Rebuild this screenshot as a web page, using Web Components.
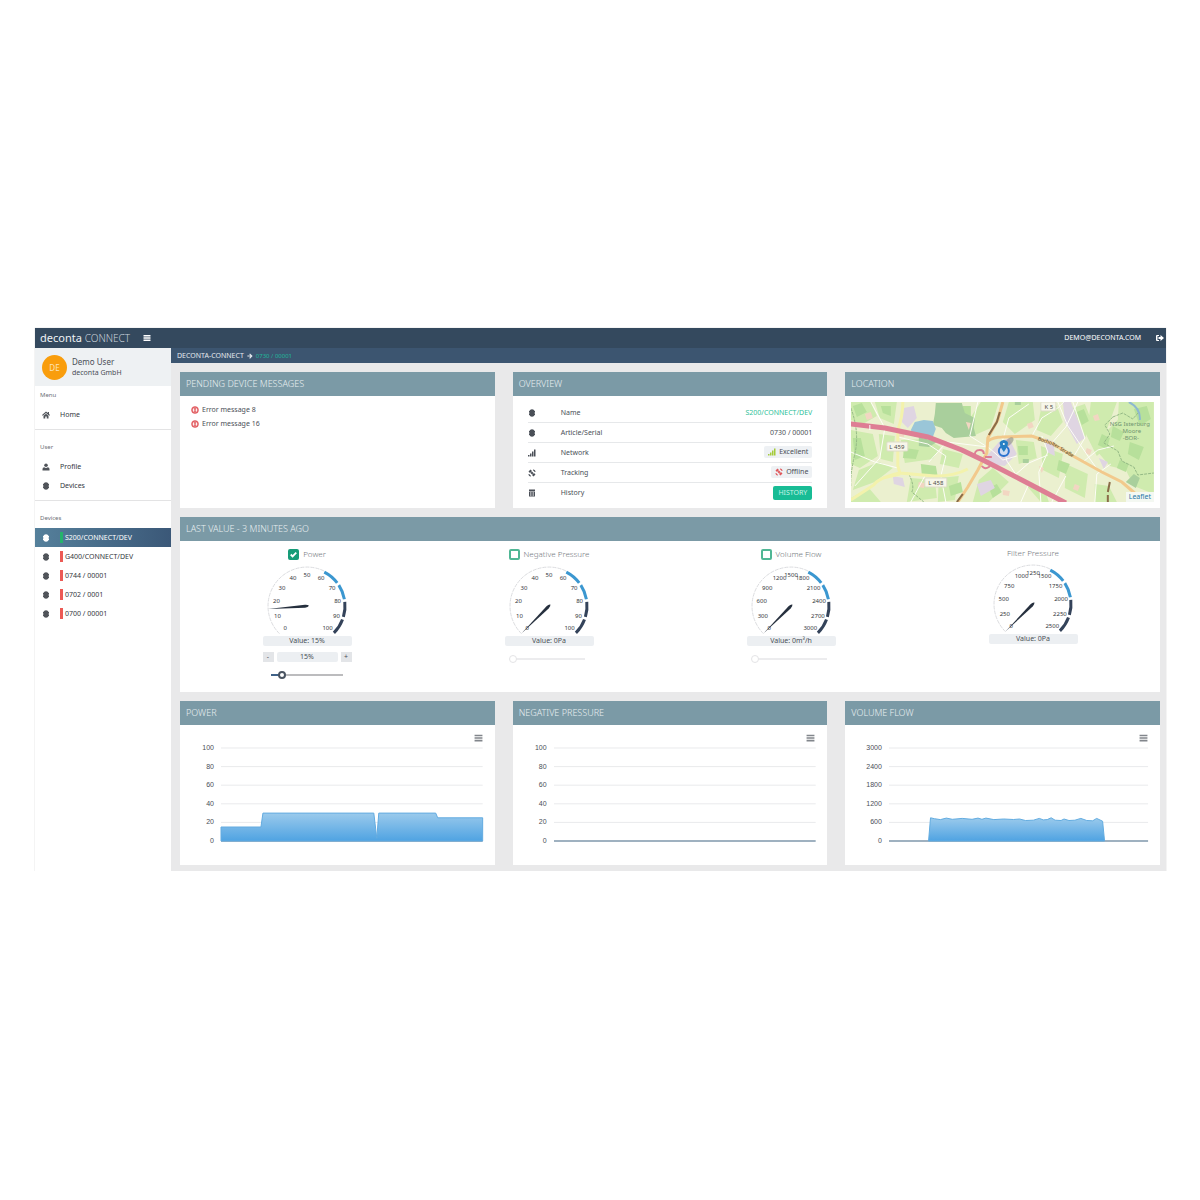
<!DOCTYPE html>
<html lang="en">
<head>
<meta charset="utf-8">
<title>deconta CONNECT</title>
<style>
    body {
        margin: 0;
        padding: 328px 34px 0 35px;
        background: #fff;
        color: #4a4f57;
        font: 7px/10px "Noto Sans", "Open Sans", sans-serif;
    }
</style>
</head>
<body>
<connect-app></connect-app>

<script>
const ICONS = {
    bars: '<path d="M1 2h14v3H1zM1 6.500h14v3H1zM1 11h14v3H1z"/>',
    home: '<path d="M8 1 0 8l1.500 1.500L8 4l6.500 5.500L16 8l-2-1.800V2h-2.500v2zM3 9.500V15h3.500v-4h3v4H13V9.500L8 5.300z"/>',
    user: '<circle cx="8" cy="4.500" r="3.500"/><path d="M1 15v-3q0-3 3.500-3.500Q8 11 11.500 8.500 15 9 15 12v3z"/>',
    device: '<path d="M4 2q4-3 8 0l1 2h1v2h-1v1h1v2h-1v1h1v2h-1l-1 2q-4 3-8 0l-1-2H2v-2h1V9H2V7h1V6H2V4h1z"/>',
    signal: '<path d="M0 12h3v3H0zM4 9h3v6H4zM8 5h3v10H8zM12 1h3v14h-3z"/>',
    satellite: '<path d="m1 5 4-4 3 3-4 4zM8 12l4-4 3 3-4 4zM5 8l3-3 3 3-3 3zM10 1q5 0 5 5h-2q0-3-3-3zM1 10q0 5 5 5v-2q-3 0-3-3z"/>',
    calendar: '<path d="M2 1h12v3H2zM2 5h12v10H2zm2 2v2h2V7zm3 0v2h2V7zm3 0v2h2V7zm-6 4v2h2v-2zm3 0v2h2v-2zm3 0v2h2v-2z" fill-rule="evenodd"/>',
    logout: '<path d="M6 2H2Q0 2 0 4v8q0 2 2 2h4v-2H3V4h3zM9 2l7 6-7 6v-4H5V6h4z"/>',
    arrow: '<path d="M8 1 15 8l-7 7-2-2 3-3.500H1v-3h8L6 3z"/>',
    error: '<path d="M8 1a7 7 0 1 0 0 14A7 7 0 0 0 8 1zM7 4h2v5H7zm0 6h2v2H7zM8 3a5 5 0 1 1 0 10A5 5 0 0 1 8 3z" fill-rule="evenodd" stroke="currentColor"/>'
};

class AppIcon extends HTMLElement {
    connectedCallback() {
        this.attachShadow({mode: "open"}).innerHTML = `
            <style>
                :host { display: inline-block; flex: none; width: 8px; height: 8px; }
                svg { display: block; width: 100%; height: 100%; fill: currentColor; }
            </style>
            <svg viewBox="0 0 16 16" aria-hidden="true">${ICONS[this.getAttribute("name")]}</svg>`;
    }
}

class AppHeader extends HTMLElement {
    connectedCallback() {
        this.attachShadow({mode: "open"}).innerHTML = `
            <style>
                :host {
                    display: flex;
                    align-items: center;
                    height: 20px;
                    padding: 0 2px 0 5px;
                    background: #34495e;
                    color: #fff;
                }
                .brand { font-size: 11px; color: #eef2f5; text-decoration: none; }
                .brand span { font-size: 10px; font-weight: 300; color: #c9d2da; }
                button { display: flex; padding: 0; border: 0; background: none; color: inherit; }
                .toggle { margin-left: 13px; }
                .mail { margin: 0 15px 0 auto; }
            </style>
            <a class="brand" href="#">deconta <span>CONNECT</span></a>
            <button class="toggle" aria-label="Toggle menu"><app-icon name="bars"></app-icon></button>
            <span class="mail">DEMO@DECONTA.COM</span>
            <button aria-label="Log out"><app-icon name="logout"></app-icon></button>`;
    }
}

class NavSection extends HTMLElement {
    connectedCallback() {
        this.attachShadow({mode: "open"}).innerHTML = `
            <style>
                :host { display: block; padding: 8px 0 5px; border-bottom: 1px solid #e3e3e4; }
                :host([first]) { padding-top: 0; }
                :host([last]) { border: 0; }
                h2 { margin: 0; padding-left: 5px; font-size: 6px; font-weight: 400; line-height: 19px; color: #6b6f75; }
            </style>
            <h2>${this.getAttribute("label")}</h2>
            <slot></slot>`;
    }
}

class NavItem extends HTMLElement {
    connectedCallback() {
        this.attachShadow({mode: "open"}).innerHTML = `
            <style>
                :host { display: block; color: #34383e; }
                :host([active]) { background: linear-gradient(90deg, #55809b, #3b5878); color: #fff; }
                a {
                    display: flex;
                    align-items: center;
                    height: 19px;
                    padding-left: 7px;
                    color: inherit;
                    text-decoration: none;
                }
                app-icon { margin-right: 10px; color: #50545a; }
                :host([active]) app-icon { color: #fff; }
                .state { width: 3px; height: 11px; margin-right: 2px; background: #ec5a55; }
                .state.on { background: #25b36b; }
            </style>
            <a href="#">
                <app-icon name="${this.getAttribute("icon")}"></app-icon>
                ${this.hasAttribute("state") ? `<span class="state ${this.getAttribute("state")}"></span>` : ""}
                <slot></slot>
            </a>`;
    }
}

class AppSidebar extends HTMLElement {
    connectedCallback() {
        this.attachShadow({mode: "open"}).innerHTML = `
            <style>
                :host { display: block; background: #fff; }
                .user { display: flex; align-items: center; gap: 5px; height: 38px; padding-left: 7px; background: #eef1f3; }
                .avatar {
                    width: 25px;
                    border-radius: 50%;
                    background: #f99d0c;
                    color: #fde3b6;
                    font-size: 8px;
                    line-height: 25px;
                    text-align: center;
                }
                .name { font-size: 8px; line-height: 11px; }
                .name small { display: block; font-size: 7px; }
            </style>
            <div class="user">
                <div class="avatar">DE</div>
                <div class="name">Demo User<small>deconta GmbH</small></div>
            </div>
            <nav>
                <nav-section label="Menu" first>
                    <nav-item icon="home">Home</nav-item>
                </nav-section>
                <nav-section label="User">
                    <nav-item icon="user">Profile</nav-item>
                    <nav-item icon="device">Devices</nav-item>
                </nav-section>
                <nav-section label="Devices" last>
                    <nav-item icon="device" state="on" active>S200/CONNECT/DEV</nav-item>
                    <nav-item icon="device" state="off">G400/CONNECT/DEV</nav-item>
                    <nav-item icon="device" state="off">0744 / 00001</nav-item>
                    <nav-item icon="device" state="off">0702 / 0001</nav-item>
                    <nav-item icon="device" state="off">0700 / 00001</nav-item>
                </nav-section>
            </nav>`;
    }
}

class PanelCard extends HTMLElement {
    connectedCallback() {
        this.attachShadow({mode: "open"}).innerHTML = `
            <style>
                :host { display: block; min-width: 0; background: #fff; }
                h2 {
                    margin: 0;
                    padding: 0 6px;
                    background: #7b9aa6;
                    color: #e8eff1;
                    font-size: 9px;
                    font-weight: 300;
                    line-height: 24px;
                }
                .body { padding: 6px; }
            </style>
            <h2>${this.getAttribute("heading")}</h2>
            <div class="body"><slot></slot></div>`;
    }
}

class MessageList extends HTMLElement {
    connectedCallback() {
        this.attachShadow({mode: "open"}).innerHTML = `
            <style>
                ul { margin: 0; padding: 1px 5px; list-style: none; }
                li { display: flex; align-items: center; gap: 3px; line-height: 14px; }
                app-icon { color: #e0575b; }
            </style>
            <ul>
                <li><app-icon name="error"></app-icon>Error message 8</li>
                <li><app-icon name="error"></app-icon>Error message 16</li>
            </ul>`;
    }
}

class DeviceOverview extends HTMLElement {
    connectedCallback() {
        this.attachShadow({mode: "open"}).innerHTML = `
            <style>
                :host { display: block; padding: 1px 9px 0; }
                table { width: 100%; border-spacing: 0; }
                th, td { height: 19px; padding: 0; border-bottom: 1px solid #e6e8ea; text-align: right; }
                th { width: 50%; font-weight: 400; text-align: left; }
                td:first-child { width: 33px; text-align: left; }
                tr:last-child > * { border: 0; }
                app-icon { display: block; }
                a { color: #2fbf9b; text-decoration: none; }
                .badge {
                    display: inline-flex;
                    align-items: center;
                    gap: 3px;
                    height: 12px;
                    padding: 0 4px;
                    border-radius: 2px;
                    background: #eef1f4;
                }
                .good { color: #a4cb39; }
                .bad { color: #e0575b; }
                button {
                    display: block;
                    height: 14px;
                    margin-left: auto;
                    padding: 0 5px;
                    border: 0;
                    border-radius: 2px;
                    background: #18bc95;
                    color: #c8f2e6;
                    font: inherit;
                }
            </style>
            <table>
                <tr><td><app-icon name="device"></app-icon></td><th scope="row">Name</th><td><a href="#">S200/CONNECT/DEV</a></td></tr>
                <tr><td><app-icon name="device"></app-icon></td><th scope="row">Article/Serial</th><td>0730 / 00001</td></tr>
                <tr><td><app-icon name="signal"></app-icon></td><th scope="row">Network</th>
                    <td><span class="badge"><app-icon class="good" name="signal"></app-icon>Excellent</span></td></tr>
                <tr><td><app-icon name="satellite"></app-icon></td><th scope="row">Tracking</th>
                    <td><span class="badge"><app-icon class="bad" name="satellite"></app-icon>Offline</span></td></tr>
                <tr><td><app-icon name="calendar"></app-icon></td><th scope="row">History</th><td><button>HISTORY</button></td></tr>
            </table>`;
    }
}

class LocationMap extends HTMLElement {
    connectedCallback() {
        this.attachShadow({mode: "open"}).innerHTML = `
            <style>
                :host { display: grid; overflow: hidden; }
                svg, a { grid-area: 1 / 1; }
                svg { width: 100%; height: 100px; }
                text { font-size: 6px; fill: #4d4d45; text-anchor: middle; }
                .shield { fill: #f7f6ea; stroke: #dedcc8; }
                .nature { fill: #6f9470; }
                .street { font-size: 5px; fill: #4b3c20; }
                a {
                    place-self: end;
                    padding: 0 3px;
                    background: #f4f8f2;
                    color: #2477a8;
                    font-size: 7px;
                    line-height: 10px;
                    text-decoration: none;
                }
            </style>
            <svg viewBox="0 0 303 100" preserveAspectRatio="xMidYMid slice" role="img" aria-label="Device location">
                <rect width="303" height="100" fill="#ebf0cf"/>
                <g fill="#cfebae">
                    <path d="M0 0h20l6 14-14 8-12-4zM24 0h22l-3 22-14-6zM0 28l22 4 5 22-18 12-9-4zM28 32l16 2-2 26-12-3zM8 68l20-8 14 6-18 14-22 8zM50 38l26-1 14 8-8 12-28 4zM92 47l20 5-4 14-19-4zM60 76l24 2 2 18-30 4zM0 96l18-10 12 14H0z"/>
                    <path d="M88 76l20-2-4 24-17 2zM128 78l14-12 16 14-20 20h-16zM130 0h18l-8 26-18 8-4-16zM158 0l24 0 2 18-20 14-12-12zM190 8l16-4 6 16-12 14-14-6zM165 38l18 2 3 16-18 6zM190 44l22 8-4 24-16-8zM176 84l18 4 4 12h-8zM215 62l22 10-3 24-20-10z"/>
                    <path d="M222 6l12-4 8 20-8 14zM240 0h26l-10 28 6 12-16 14-10-20zM268 0h35v92l-20-8-8-16-16-4-12-14 13-8-3-14 10-10zM244 82l14 2 8 16h-22z"/>
                </g>
                <g fill="#b7e09b">
                    <path d="M2 4l9-3 5 9-10 5zM30 4h10v10l-8-3zM2 36h8l4 18-10 4zM54 46l14 2-3 9-13-1zM70 62l15 2 2 11-16-2zM112 4h8v12l-7 3zM98 84l12-4 2 10-12 4zM138 86l8-4 5 8-9 6zM167 44h10v9h-9zM208 58l11 4-4 10-9-4zM226 10l7-3 5 12-7 4zM251 32l8 4-3 11-9-4zM262 24l11 6-4 9-9-4zM279 40l14 5-5 13-11-6zM269 58l9 4-3 8-9-4zM283 7l13-3 4 13-11 7z"/>
                </g>
                <g fill="#a9cf9c">
                    <path d="M85 1h26l3 10 10 5-1 10 2 8-22 2-8-5-4-5-9-3 2-11zM68 35l18 5-8 5-10-1zM275 80l8-8 6 4-4 10zM164 0h6v3h-6zM172 57h6v4h-6z"/>
                </g>
                <g fill="#dfd5e2">
                    <path d="M53 6l10-2 3 12-9 10-6-6zM136 54l12-14 10-4 8 16-12 12-16-2zM126 82l14-4 4 8-14 8zM212 0h8l14 36-8 6-12-22zM194 36l9 4 1 14-8-4zM42 74l10 2 2 9-11-3zM248 56l9 4-4 7z"/>
                </g>
                <g fill="#f2d6c2">
                    <path d="M14 12l6-2 2 6-6 2zM48 28l6 1-1 6-6-1zM68 80l6 1-1 5-6-1zM152 88l7 1-1 5-6-1zM176 22l5-2 2 5-5 2zM236 46l5 2-2 5-5-2zM224 82l5 2-2 5-5-2zM115 20l5 1-2 7zM188 64l5 2-2 5zM242 14l5-2 2 6-5 1z"/>
                </g>
                <g fill="none" stroke="#fdfdf6" stroke-width="1">
                    <path d="M20 0 34 26 29 56 4 84M47 35l30 7 18 12-5 20 5 26M0 50l24 10 23 6M60 100 74 74M127 0l-8 34 16 10M137 45 96 40 78 60M152 38l6-22 20-14M181 34l10-18 16-10 6-6M201 41l14-16 12-25M190 100l-2-30 9-20-6-16M162 75l16-14 19-8M222 56l12-20-12-36M232 60l15-12 16-4M244 100l2-28 14-10M170 100l8-18M215 74l-14 26"/>
                    <path d="M136 44l16 14 14-4M151 35l5 24 12 18M207 0l10 24 20 30 10 14"/>
                </g>
                <g fill="none" stroke="#95ba86">
                    <path d="M0 6q9 24 4 46T0 84M262 15l-8 8 5 9-6 9 14 8 4 10 12 6 4 8 16-2M262 15l10-4 10 6 6-7M58 72q6 12 3 18l12 10" stroke-dasharray="3 1"/>
                </g>
                <path d="M278 0q12 6 11 18" fill="none" stroke="#8db8d0" stroke-width="2"/>
                <path d="M64 20l9-2 9 1 3 8-3 8H64l-4-7z" fill="#9ac6d8"/>
                <g fill="none" stroke="#f3f2ac" stroke-width="3">
                    <path d="M52 0q0 14-5 28v36l2 7 35 3q20 0 33-7M49 71q-22 5-26 12L0 98M49 72l-17 4"/>
                </g>
                <g fill="none" stroke="#f2c98c" stroke-width="3">
                    <path d="M152 0l-5 18-10 18-1 15-9 17-10 17-10 15M137 39q6-4 14-4l30-1 20 7 23 14 27 15 20 10 14 12"/>
                </g>
                <g fill="none" stroke="#8a6c48" stroke-width="2">
                    <path d="M149 10l-3 10-8 13M112 92l-6 8M259 80l-2 10M257 93v7"/>
                </g>
                <g fill="none" stroke="#de7e94">
                    <path d="M0 22l34 4 43 9 34 13 23 11 37 19 44 23" stroke-width="5"/>
                    <path d="M124 55q-1-7 5-7 4 0 4 4M131 64q3 4 7 1 3-3 0-5M134 55h7" stroke-width="2"/>
                </g>
                <path d="M19 23v5" stroke="#fff"/>
                <ellipse cx="158" cy="40" rx="6" ry="3" transform="rotate(-45 158 40)" fill="#777" opacity=".5"/>
                <circle cx="153" cy="49" r="5" fill="#cfdcf2" stroke="#2b72cf" stroke-width="2"/>
                <path d="M153 50q-5-7-4-10 4-4 8 0 1 3-4 10z" fill="#2780c4"/>
                <circle cx="153" cy="42" r="1" fill="#fff"/>
                <rect class="shield" x="36" y="40" width="21" height="9" rx="1"/><text x="46" y="47">L 459</text>
                <rect class="shield" x="74" y="76" width="22" height="9" rx="1"/><text x="85" y="83">L 458</text>
                <rect class="shield" x="190" y="0" width="15" height="9" rx="1"/><text x="198" y="7">K 5</text>
                <path id="street" d="M184 37l17 6 23 14" fill="none"/>
                <text class="street"><textPath href="#street" startOffset="50%">Bocholter Straße</textPath></text>
                <text class="nature" x="279" y="24">NSG Isterburg</text>
                <text class="nature" x="281" y="31">Moore</text>
                <text class="nature" x="280" y="38">-BOR-</text>
            </svg>
            <a href="#">Leaflet</a>`;
    }
}

class DeviceGauge extends HTMLElement {
    point(fraction, radius) {
        const angle = (fraction * 270 - 135) * Math.PI / 180;
        return [(45 + radius * Math.sin(angle)).toFixed(1), (40 - radius * Math.cos(angle)).toFixed(1)];
    }

    arc(from, to, radius) {
        const large = to - from > 0.667 ? 1 : 0;
        return `M${this.point(from, radius)}A${radius} ${radius} 0 ${large} 1 ${this.point(to, radius)}`;
    }

    connectedCallback() {
        const label = this.getAttribute("label");
        const max = Number(this.getAttribute("max"));
        const value = Number(this.getAttribute("value"));
        const unit = this.getAttribute("unit");
        const mode = this.getAttribute("mode");
        let ticks = "";
        for (let i = 0; i <= 10; i++) {
            const text = String(max / 10 * i);
            const [x, y] = this.point(i / 10, 31);
            // longer numbers move inwards, clear of the ring
            const inset = Math.max(0, text.length - 2) * 1.3 * Math.sign(i - 5);
            ticks += `<text x="${x - inset}" y="${Number(y) + 2}">${text}</text>`;
        }

        this.attachShadow({mode: "open"}).innerHTML = `
            <style>
                :host { display: flex; flex-direction: column; align-items: center; padding-top: 1px; }
                .title { display: flex; align-items: center; gap: 4px; height: 12px; margin-bottom: 6px; font-size: 8px; font-weight: 300; color: #74787e; }
                :host([mode="plain"]) .title { height: 10px; }
                input[type="checkbox"] {
                    appearance: none;
                    width: 11px;
                    height: 11px;
                    margin: 0;
                    border: 2px solid #50b795;
                    border-radius: 2px;
                }
                input[type="checkbox"]:checked {
                    border-color: #169c78;
                    background: #169c78;
                }
                .tick { display: grid; }
                .tick > * { grid-area: 1 / 1; }
                .tick svg { width: 11px; height: 11px; fill: none; stroke: #fff; stroke-width: 2; pointer-events: none; }
                .dial { width: 90px; height: 70px; }
                .dial text { font-size: 6px; fill: #33363b; text-anchor: middle; }
                .ring { fill: none; stroke: #dcdde0; stroke-dasharray: 4 1; }
                .high, .top { fill: none; stroke: #3b97d0; stroke-width: 3; }
                .top { stroke: #34435a; }
                .value, output { background: #eceff2; text-align: center; border-radius: 2px; }
                .value { width: 89px; }
                .stepper { display: flex; gap: 3px; width: 89px; margin-top: 6px; }
                .stepper output { flex: 1; }
                .stepper button { width: 11px; height: 10px; padding: 0; border: 0; background: #e3e5e8; color: inherit; font: inherit; line-height: 8px; }
                input[type="range"] {
                    appearance: none;
                    width: 80px;
                    height: 10px;
                    margin: 8px 0 0;
                    background: linear-gradient(90deg, #3f6288 16%, #bcbcbe 16%) center / 72px 2px no-repeat;
                }
                input[type="range"]::-webkit-slider-thumb {
                    appearance: none;
                    box-sizing: border-box;
                    width: 8px;
                    height: 8px;
                    border: 2px solid #4a5461;
                    border-radius: 50%;
                    background: #fff;
                }
                input[type="range"]:disabled { background-image: linear-gradient(#ececee, #ececee); }
                input[type="range"]:disabled::-webkit-slider-thumb { border: 1px solid #e4e4e6; }
            </style>
            <label class="title">
                ${mode === "plain" ? "" : `<span class="tick">
                    <input type="checkbox" ${mode === "active" ? "checked" : ""}>
                    ${mode === "active" ? '<svg viewBox="0 0 12 12"><path d="m3 6 2 2 4-4"/></svg>' : ""}
                </span>`}
                ${label}
            </label>
            <svg class="dial" viewBox="0 0 90 70">
                <path class="ring" d="${this.arc(0, 0.6, 39)}"/>
                <path class="high" d="${this.arc(0.6, 0.695, 38)}${this.arc(0.71, 0.795, 38)}"/>
                <path class="top" d="${this.arc(0.81, 0.895, 38)}${this.arc(0.91, 1, 38)}"/>
                ${ticks}
                <path d="M43.500 38 45 1l1.500 37q0 3-1.500 4-1.500-1-1.500-4z" fill="#26303e" transform="rotate(${value / max * 270 - 135} 45 40)"/>
            </svg>
            <div class="value">Value: ${value}${unit}</div>
            ${mode === "active" ? `<div class="stepper">
                <button aria-label="Decrease">-</button>
                <output>${value}${unit}</output>
                <button aria-label="Increase">+</button>
            </div>` : ""}
            ${mode === "plain" ? "" : `<input type="range" aria-label="${label}" min="0" max="${max}" value="${value}" ${mode === "active" ? "" : "disabled"}>`}`;
    }
}

class AreaChart extends HTMLElement {
    connectedCallback() {
        const max = Number(this.getAttribute("max"));
        const points = (this.getAttribute("points") || "").split(" ").filter(Boolean)
            .map(pair => pair.split(",").map(Number))
            .map(([x, v]) => `${x},${(93 - v / max * 93).toFixed(1)}`);
        const labels = [5, 4, 3, 2, 1, 0].map(i => `<span>${max / 5 * i}</span>`).join("");
        const grid = [0, 1, 2, 3, 4].map(i => `M0 ${i * 18.6}H262`).join("");

        this.attachShadow({mode: "open"}).innerHTML = `
            <style>
                :host { display: block; padding: 2px 6px 14px 15px; font-family: "Liberation Sans", sans-serif; }
                button { display: flex; margin: 0 0 1px auto; padding: 0; border: 0; background: none; color: #82868c; }
                button app-icon { width: 9px; height: 10px; }
                .plot { display: flex; gap: 7px; }
                .axis {
                    display: flex;
                    flex-direction: column;
                    justify-content: space-between;
                    min-width: 13px;
                    font-size: 7px;
                    line-height: 8px;
                    text-align: right;
                }
                svg { flex: 1; min-width: 0; height: 93px; margin: 4px 0; overflow: visible; }
                .grid { stroke: #e9eaec; }
            </style>
            <button aria-label="Chart menu"><app-icon name="bars"></app-icon></button>
            <div class="plot">
                <div class="axis">${labels}</div>
                <svg viewBox="0 0 262 93" preserveAspectRatio="none">
                    <linearGradient id="fill" x2="0" y2="1">
                        <stop stop-color="#9bcaec"/>
                        <stop offset="1" stop-color="#4fa3e2"/>
                    </linearGradient>
                    <path class="grid" d="${grid}"/>
                    <path d="M0 93H262" stroke="#7f97ab" stroke-width="1.500"/>
                    ${points.length ? `<polygon points="${points.join(" ")}" fill="url(#fill)" stroke="#62abe0"/>` : ""}
                </svg>
            </div>`;
    }
}

class ConnectApp extends HTMLElement {
    connectedCallback() {
        this.attachShadow({mode: "open"}).innerHTML = `
            <style>
                :host { display: block; box-shadow: 0 0 1px #bbb; }
                .layout { display: grid; grid-template-columns: 136px 1fr; }
                main { min-width: 0; background: #e9e9ea; }
                .crumbs {
                    display: flex;
                    align-items: center;
                    gap: 3px;
                    height: 15px;
                    padding-left: 6px;
                    background: #3c5570;
                    color: #e4e9ee;
                }
                .crumbs a { color: inherit; text-decoration: none; }
                .crumbs app-icon { width: 6px; height: 6px; }
                .crumbs span { color: #1fb79a; font-size: 6px; }
                .content { display: grid; gap: 9px; padding: 9px 6px 6px 9px; }
                .row { display: grid; grid-template-columns: repeat(3, 1fr); gap: 18px; }
                .gauges { display: grid; grid-template-columns: repeat(4, 1fr); padding-bottom: 6px; }
            </style>
            <app-header></app-header>
            <div class="layout">
                <app-sidebar></app-sidebar>
                <main>
                    <div class="crumbs">
                        <a href="#">DECONTA-CONNECT</a>
                        <app-icon name="arrow"></app-icon>
                        <span>0730 / 00001</span>
                    </div>
                    <div class="content">
                        <div class="row">
                            <panel-card heading="PENDING DEVICE MESSAGES"><message-list></message-list></panel-card>
                            <panel-card heading="OVERVIEW"><device-overview></device-overview></panel-card>
                            <panel-card heading="LOCATION"><location-map></location-map></panel-card>
                        </div>
                        <panel-card heading="LAST VALUE - 3 MINUTES AGO">
                            <div class="gauges">
                                <device-gauge label="Power" mode="active" max="100" value="15" unit="%"></device-gauge>
                                <device-gauge label="Negative Pressure" mode="idle" max="100" value="0" unit="Pa"></device-gauge>
                                <device-gauge label="Volume Flow" mode="idle" max="3000" value="0" unit="m³/h"></device-gauge>
                                <device-gauge label="Filter Pressure" mode="plain" max="2500" value="0" unit="Pa"></device-gauge>
                            </div>
                        </panel-card>
                        <div class="row">
                            <panel-card heading="POWER">
                                <area-chart max="100" points="0,0 0,15 40,15 42,30 153,30 156,3 158,30 215,30 217,25 262,25 262,0"></area-chart>
                            </panel-card>
                            <panel-card heading="NEGATIVE PRESSURE">
                                <area-chart max="100"></area-chart>
                            </panel-card>
                            <panel-card heading="VOLUME FLOW">
                                <area-chart max="3000" points="40,0 42,750 46,720 52,690 58,740 64,700 74,730 84,700 90,740 94,700 98,740 106,690 116,710 126,695 132,710 138,660 146,670 152,730 156,680 160,690 164,750 168,670 174,660 177,710 182,660 188,670 194,730 200,660 206,650 210,730 216,640 218,0"></area-chart>
                            </panel-card>
                        </div>
                    </div>
                </main>
            </div>`;
    }
}

customElements.define("app-icon", AppIcon);
customElements.define("app-header", AppHeader);
customElements.define("nav-section", NavSection);
customElements.define("nav-item", NavItem);
customElements.define("app-sidebar", AppSidebar);
customElements.define("panel-card", PanelCard);
customElements.define("message-list", MessageList);
customElements.define("device-overview", DeviceOverview);
customElements.define("location-map", LocationMap);
customElements.define("device-gauge", DeviceGauge);
customElements.define("area-chart", AreaChart);
customElements.define("connect-app", ConnectApp);
</script>
</body>
</html>
